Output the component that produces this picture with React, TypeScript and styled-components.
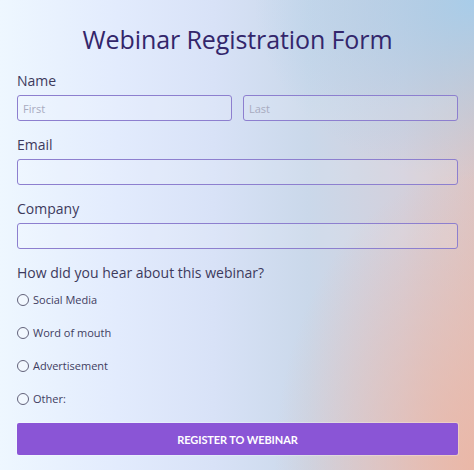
import styled, { createGlobalStyle } from "styled-components"

const GlobalStyle = createGlobalStyle`
  html, body {
    margin: 0;
    padding: 0;
  }
  body {
    font-family: "Open Sans", "Noto Sans", sans-serif;
  }
  * {
    box-sizing: border-box;
  }
`

const Page = styled.div`
  width: 474px;
  height: 470px;
  overflow: hidden;
  background:
    radial-gradient(ellipse 220px 180px at 100% 0%, rgba(165, 205, 235, 0.95), rgba(165, 205, 235, 0) 100%),
    radial-gradient(ellipse 200px 300px at 100% 100%, rgba(236, 182, 164, 0.9), rgba(236, 182, 164, 0) 100%),
    linear-gradient(90deg, #eef7ff 0%, #e2ebfd 25%, #d8e2f7 45%, #cad8ea 65%, #d3d0dc 85%, #dcc6c6 100%);
  padding: 22px 16px 0 17px;
`

const Title = styled.h1`
  margin: 0 0 16px;
  text-align: center;
  font-size: 25px;
  font-weight: 400;
  color: #33266b;
  line-height: 34px;
  letter-spacing: -0.1px;
`

const Field = styled.div`
  display: flex;
  flex-direction: column;
  gap: 5px;
  margin-bottom: 15px;
`

const Label = styled.label`
  font-size: 14px;
  line-height: 18px;
  color: #3d3a5c;
`

const Row = styled.div`
  display: flex;
  gap: 11px;
`

const Input = styled.input`
  flex: 1;
  min-width: 0;
  height: 26px;
  border: 1px solid #8d7fcf;
  border-radius: 3px;
  background: rgba(255, 255, 255, 0.12);
  padding: 0 5px;
  font-family: inherit;
  font-size: 11px;
  color: #333;
  outline: none;

  &::placeholder {
    color: #a8abbf;
  }
`

const Question = styled.div`
  font-size: 14px;
  line-height: 18px;
  color: #3d3a5c;
  margin: 0 0 10px;
`

const Options = styled.div`
  display: flex;
  flex-direction: column;
  gap: 18px;
`

const Option = styled.label`
  display: flex;
  align-items: center;
  gap: 4px;
  font-size: 11px;
  line-height: 15px;
  color: #3f3d5e;
`

const RadioCircle = styled.span`
  width: 12px;
  height: 12px;
  border: 1px solid #62627a;
  border-radius: 50%;
  background: rgba(255, 255, 255, 0.35);
`

const Button = styled.button`
  display: block;
  width: 100%;
  height: 32px;
  margin-top: 17px;
  border: none;
  border-radius: 2px;
  background: #8a55d6;
  color: #fff;
  font-family: "Lato", sans-serif;
  font-weight: 700;
  font-size: 11px;
  letter-spacing: -0.1px;
  box-shadow: 0 0 0 1px rgba(255, 255, 255, 0.25);
`

const sources = ["Social Media", "Word of mouth", "Advertisement", "Other:"]

const App = () => {
  return (
    <Page>
      <GlobalStyle />
      <Title>Webinar Registration Form</Title>
      <Field>
        <Label>Name</Label>
        <Row>
          <Input placeholder="First" />
          <Input placeholder="Last" />
        </Row>
      </Field>
      <Field>
        <Label>Email</Label>
        <Row>
          <Input />
        </Row>
      </Field>
      <Field>
        <Label>Company</Label>
        <Row>
          <Input />
        </Row>
      </Field>
      <Question>How did you hear about this webinar?</Question>
      <Options>
        {sources.map((s) => (
          <Option key={s}>
            <RadioCircle />
            {s}
          </Option>
        ))}
      </Options>
      <Button type="button">REGISTER TO WEBINAR</Button>
    </Page>
  )
}

export default App
